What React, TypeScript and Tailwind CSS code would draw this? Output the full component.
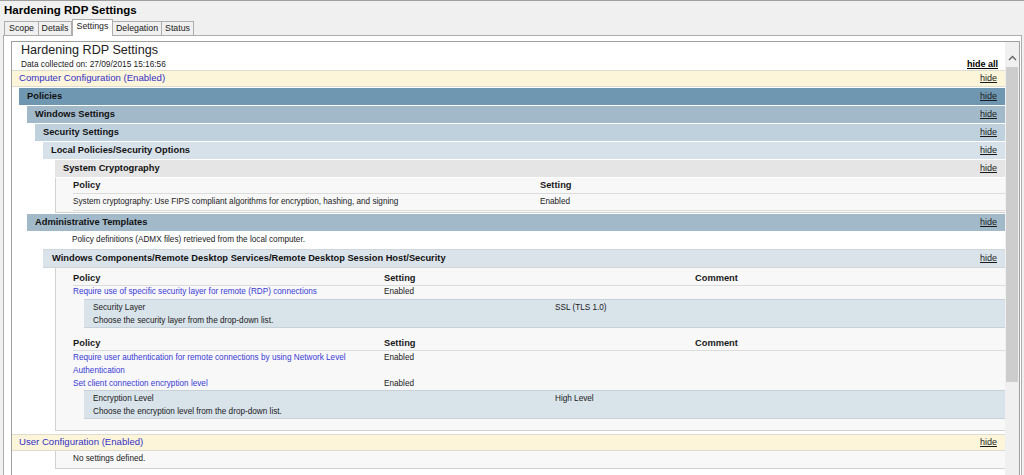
import React from 'react'

const linkBlue = 'text-[#3838d6]'

function Hide() {
    return <span className="underline text-[9px] text-[#1a1a1a] pr-[8px]">hide</span>
}

function Header({ label, indent, bg, tall }: { label: string; indent: string; bg: string; tall?: boolean }) {
    return (
        <div className={`${indent} ${bg} ${tall ? 'h-[19px]' : 'h-[18px]'} border-b border-white flex items-center justify-between`}>
            <span className="pl-[8px] font-bold text-[9.3px] text-[#111]">{label}</span>
            <Hide />
        </div>
    )
}

function Yellow({ label }: { label: string }) {
    return (
        <div className="h-[17px] bg-[#fdf5d9] border-y border-[#dedbd0] flex items-center justify-between">
            <span className="pl-[7px] text-[9.6px] text-[#3330c8]">{label}</span>
            <Hide />
        </div>
    )
}

export default function App() {
    return (
        <div className="w-[1024px] h-[475px] overflow-hidden bg-[#f0f0f0] border-t border-[#a0a0a0] flex flex-col font-['Liberation_Sans',Arial,sans-serif] text-[#1a1a1a]">
            <div className="h-[19px] shrink-0 pl-[4px] flex items-center text-[11.5px] font-bold text-black">Hardening RDP Settings</div>
            <div className="h-[15px] shrink-0 flex items-end pl-[4px] text-[8.8px] relative z-10">
                <div className="h-[14px] w-[35px] border border-b-0 border-[#adadad] flex items-center justify-center">Scope</div>
                <div className="h-[14px] w-[33px] border border-b-0 border-l-0 border-[#adadad] flex items-center justify-center">Details</div>
                <div className="h-[17px] w-[41px] -mb-px border border-b-0 border-[#adadad] bg-white flex items-center justify-center pb-[2px]">Settings</div>
                <div className="h-[14px] w-[49px] border border-b-0 border-l-0 border-[#adadad] flex items-center justify-center">Delegation</div>
                <div className="h-[14px] w-[32px] border border-b-0 border-l-0 border-[#adadad] flex items-center justify-center">Status</div>
            </div>
            <div className="flex-1 ml-[3px] mr-[2px] border border-b-0 border-[#adadad] bg-white pt-[5px] pl-[7px] pr-[1px] flex min-h-0">
                <div className="flex-1 flex border-l border-t border-r border-[#a0a0a0] min-h-0">
                    <div className="flex-1 bg-white flex flex-col min-w-0">
                        <div className="pl-[9px] pt-[1px]">
                            <div className="h-[15px] flex items-center text-[12.6px] text-[#222]">Hardening RDP Settings</div>
                            <div className="h-[12px] flex items-center justify-between text-[8.3px]">
                                <span>Data collected on: 27/09/2015 15:16:56</span>
                                <span className="font-bold underline text-[9px] pr-[7px] pt-[2px] text-black">hide all</span>
                            </div>
                        </div>
                        <Yellow label="Computer Configuration (Enabled)" />
                        <div className="mt-[1px]">
                            <Header label="Policies" indent="ml-[7px]" bg="bg-[#7097b2]" />
                            <Header label="Windows Settings" indent="ml-[15px]" bg="bg-[#a2b9ca]" />
                            <Header label="Security Settings" indent="ml-[23px]" bg="bg-[#c0d1de]" />
                            <Header label="Local Policies/Security Options" indent="ml-[31px]" bg="bg-[#d7e1e9]" />
                            <Header label="System Cryptography" indent="ml-[43px]" bg="bg-[#e5e5e5]" />
                        </div>
                        <div className="ml-[43px] bg-[#f8f8f8] border-l border-b border-[#d2d2d2] pl-[17px] pb-[1px] text-[8.2px]">
                            <div className="h-[16px] border-b border-[#dcdcdc] grid grid-cols-[467px_1fr] items-center font-bold text-[9.3px] pt-px">
                                <span>Policy</span>
                                <span>Setting</span>
                            </div>
                            <div className="h-[17px] border-b border-[#dcdcdc] grid grid-cols-[467px_1fr] items-center">
                                <span>System cryptography: Use FIPS compliant algorithms for encryption, hashing, and signing</span>
                                <span>Enabled</span>
                            </div>
                        </div>
                        <div className="mt-[1px]">
                            <Header label="Administrative Templates" indent="ml-[15px]" bg="bg-[#a2b9ca]" />
                        </div>
                        <div className="ml-[43px] h-[17px] pl-[17px] flex items-center text-[8.2px]">
                            Policy definitions (ADMX files) retrieved from the local computer.
                        </div>
                        <div className="ml-[31px] h-[19px] bg-[#dae3ea] border-y border-[#cfd6dc] flex items-center justify-between">
                            <span className="pl-[9px] font-bold text-[9.3px] text-[#111]">Windows Components/Remote Desktop Services/Remote Desktop Session Host/Security</span>
                            <Hide />
                        </div>
                        <div className="ml-[43px] bg-[#f8f8f8] border-l border-b border-[#d2d2d2] pl-[17px] pt-[4px] pb-[11px] text-[8.2px]">
                            <div className="h-[14px] border-b border-[#dcdcdc] grid grid-cols-[311px_311px_1fr] items-center font-bold text-[9.3px]">
                                <span>Policy</span>
                                <span>Setting</span>
                                <span>Comment</span>
                            </div>
                            <div className="h-[13px] grid grid-cols-[311px_311px_1fr] items-center">
                                <span className={linkBlue}>Require use of specific security layer for remote (RDP) connections</span>
                                <span>Enabled</span>
                            </div>
                            <div className="ml-[11px] bg-[#d9e3ea] border-y border-[#c9d1d8] pt-px pl-[9px] leading-[13px]">
                                <div className="grid grid-cols-[462px_1fr]">
                                    <span>Security Layer</span>
                                    <span>SSL (TLS 1.0)</span>
                                </div>
                                <div>Choose the security layer from the drop-down list.</div>
                            </div>
                            <div className="mt-[9px] h-[14px] border-b border-[#dcdcdc] grid grid-cols-[311px_311px_1fr] items-center font-bold text-[9.3px]">
                                <span>Policy</span>
                                <span>Setting</span>
                                <span>Comment</span>
                            </div>
                            <div className="grid grid-cols-[311px_311px_1fr] leading-[13px]">
                                <span className={linkBlue}>Require user authentication for remote connections by using Network Level<br />Authentication</span>
                                <span>Enabled</span>
                                <span></span>
                                <span className={linkBlue}>Set client connection encryption level</span>
                                <span>Enabled</span>
                            </div>
                            <div className="ml-[11px] bg-[#d9e3ea] border-y border-[#c9d1d8] pt-px pl-[9px] leading-[13px]">
                                <div className="grid grid-cols-[462px_1fr]">
                                    <span>Encryption Level</span>
                                    <span>High Level</span>
                                </div>
                                <div>Choose the encryption level from the drop-down list.</div>
                            </div>
                        </div>
                        <div className="mt-[3px]">
                            <Yellow label="User Configuration (Enabled)" />
                        </div>
                        <div className="ml-[43px] h-[18px] bg-[#f8f8f8] border-l border-b border-[#d2d2d2] pl-[17px] flex items-center text-[8.2px]">
                            No settings defined.
                        </div>
                    </div>
                    <div className="w-[14px] bg-[#f0f0f0] flex flex-col">
                        <div className="h-[25px] flex items-center justify-center pt-[6px]">
                            <svg width="9" height="6" viewBox="0 0 9 6">
                                <polyline points="1,5 4.5,1.5 8,5" fill="none" stroke="#606060" strokeWidth="1.3" />
                            </svg>
                        </div>
                        <div className="h-[315px] mx-[1px] bg-[#cdcdcd]" />
                    </div>
                </div>
            </div>
        </div>
    )
}
